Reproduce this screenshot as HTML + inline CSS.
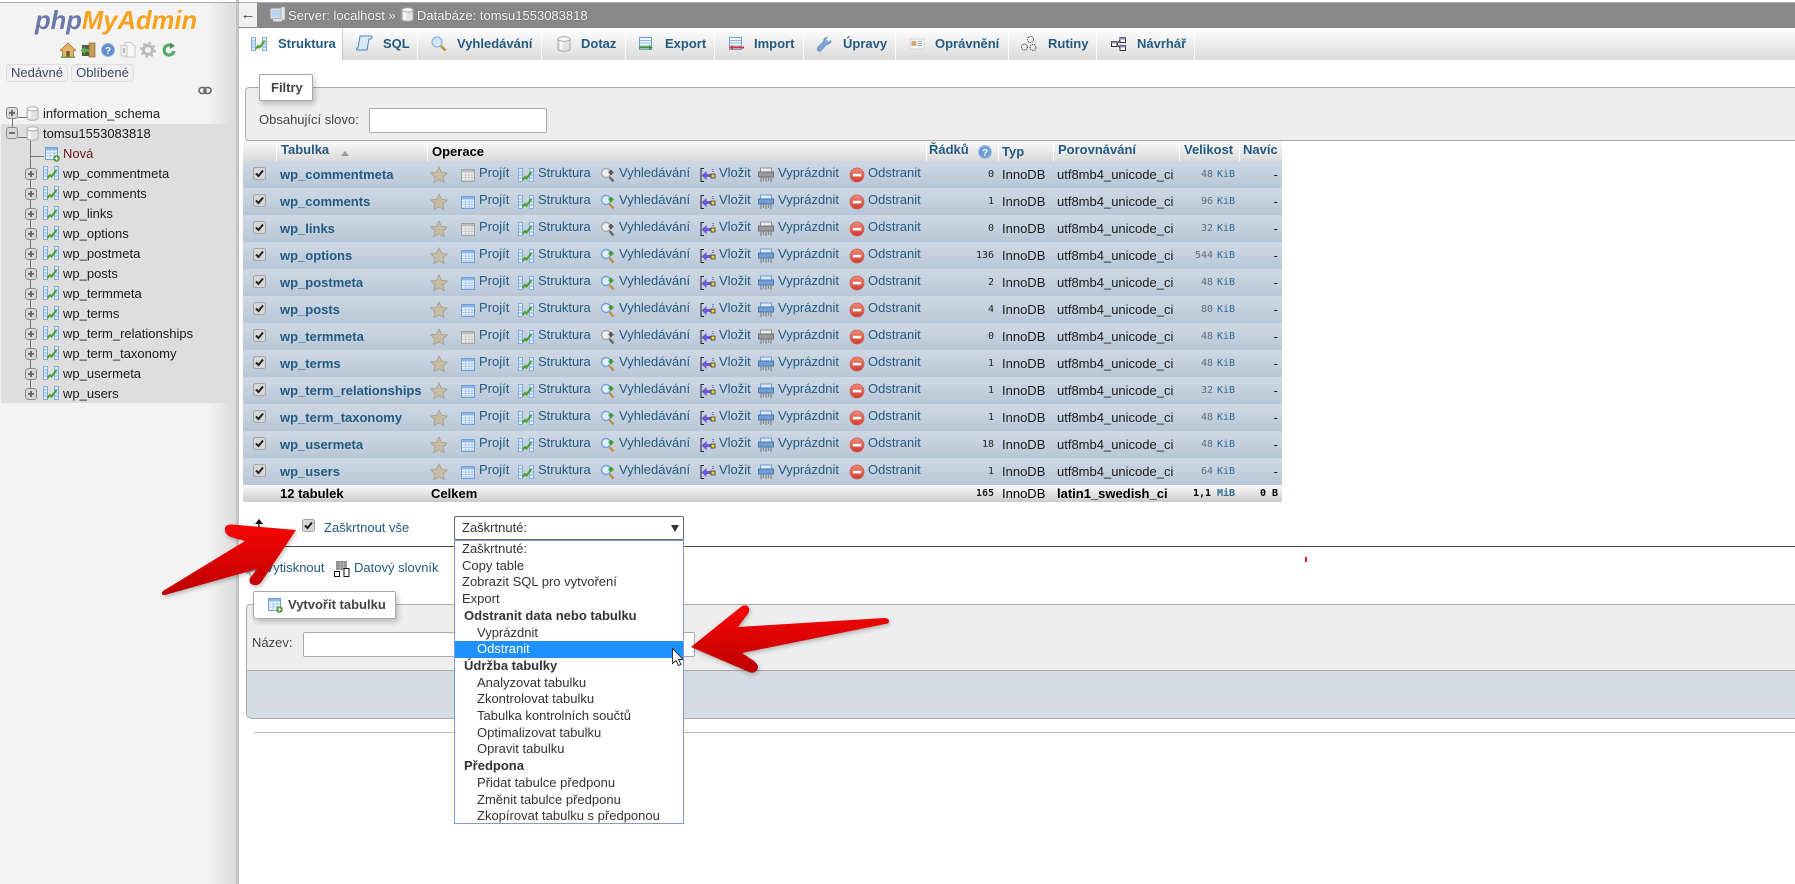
<!DOCTYPE html>
<html lang="cs"><head><meta charset="utf-8"><title>phpMyAdmin</title>
<style>
html,body{margin:0;padding:0;width:1795px;height:884px;overflow:hidden;background:#fff}
body{position:relative;font:13px/1.2 "Liberation Sans",Arial,sans-serif;color:#444}
div,span,b,svg,a{position:absolute;white-space:nowrap}
svg.i{width:16px;height:16px}
#side{left:0;top:2px;width:236px;height:882px;background:linear-gradient(to right,#f3f3f3 0,#f3f3f3 88%,#dcdcdc 100%)}
#split{left:236px;top:0;width:3px;height:884px;background:#c4c4c4}
#tl{left:0;top:0;width:1795px;height:2px;background:#fff}
#tg{left:0;top:2px;width:1795px;height:1px;background:#aaa}
.logo{left:35px;top:7px;font:italic bold 25.6px/28px "Liberation Sans",sans-serif;letter-spacing:0}
.btn{top:64px;height:16px;line-height:16px;border:1px solid #ddd;border-radius:4px;background:#f1f1f1;color:#3e4a63;text-align:center}
.tr{height:20px;line-height:20px;color:#1c1c1c;left:63px;margin-top:1px}
.ln{background:#777}
#hl{left:1px;top:124px;width:235px;height:279px;background:#dedede}
#top{left:239px;top:3px;width:1556px;height:25px;background:#888;color:#fff;line-height:25px;text-shadow:0 0 1px #333}
#back{left:239px;top:3px;width:18px;height:24px;background:#f1f1f1;color:#444;text-align:center;line-height:24px;font-size:15px}
#tabs{left:239px;top:28px;width:1556px;height:32px;background:linear-gradient(#fff,#dbdbdb)}
.tab{top:28px;height:32px;border-right:1px solid #fdfdfd}
.tx{top:28px;height:32px;line-height:32px;font-weight:bold;color:#235a81}
.box{background:#eee;border:1px solid #aaa;border-right:0;border-radius:4px 0 0 4px;box-sizing:border-box}
.leg{background:#fff;border:1px solid #aaa;border-radius:2px;box-shadow:2px 3px 6px rgba(0,0,0,.22);box-sizing:border-box;font-weight:bold;color:#444;line-height:25px}
.inp{background:#fff;border:1px solid #aaa;border-radius:2px;box-sizing:border-box}
#hd{left:243px;top:141px;width:1039px;height:20px;background:linear-gradient(#fafafa,#dadada)}
.sep{top:0;width:1px;height:20px;background:#fff}
.h{top:0;line-height:18px;font-weight:bold;color:#235a81}
.r{left:243px;width:1039px;height:27px;background:linear-gradient(#cfd9e4,#b7c6d7);color:#1d1d1d}
.r svg.c{left:10px;top:6px;width:13px;height:13px}
.r svg.s{left:187px;top:5px;width:18px;height:18px}
.n{left:37px;top:0;line-height:27px;font-weight:bold;color:#235a81}
.o{top:0;line-height:24px;color:#235a81}
.r svg.i{top:6px}
.i1{left:217px}.i2{left:275px}.i3{left:357px}.i4{left:457px}.i5{left:515px}.i6{left:606px}
.t1{left:236px}.t2{left:295px}.t3{left:376px}.t4{left:476px}.t5{left:535px}.t6{left:625px}
.m{font:10px/27px "DejaVu Sans Mono","Liberation Mono",monospace;top:0}
.k{right:288px;color:#222}.z{right:69px;color:#5c6c80}.u{left:974px;color:#2f6a92}.d{right:4px;top:0;line-height:27px}
.e{left:759px;top:0;line-height:27px}.l{left:814px;top:0;line-height:27px}
#tot{left:243px;top:485px;width:1039px;height:17px;background:linear-gradient(#fbfbfb,#cbcbcb);color:#000;font-weight:bold}
#tot span,#tot b{line-height:17px}
#tot .m{line-height:17px;font-weight:bold}
#dd{left:454px;top:540px;width:230px;height:284px;box-sizing:border-box;background:#fff;border:1px solid #7c9ad6;color:#333}
.it{left:0;width:228px;height:16.7px;line-height:16px;color:#333;box-sizing:border-box}
.p{padding-left:7px}.g{padding-left:9px;font-weight:bold}.ch{padding-left:22px}
</style></head><body>
<svg width="0" height="0" style="position:absolute;left:0;top:0"><defs>
<linearGradient id="redg" x1="0" y1="0" x2="0" y2="1"><stop offset="0" stop-color="#f70505"/><stop offset="1" stop-color="#bd0000"/></linearGradient>
<linearGradient id="dropg" x1="0" y1="0" x2="0" y2="1"><stop offset="0" stop-color="#f08a7a"/><stop offset="1" stop-color="#d23a2a"/></linearGradient>
<symbol id="st" viewBox="0 0 16 16"><rect x=".5" y="1.5" width="4" height="13" fill="#e6eef9" stroke="#7fade2"/><rect x="11.5" y="1.5" width="4" height="13" fill="#e6eef9" stroke="#7fade2"/><path d="M1 5h3M1 8h3M1 11h3M12 5h3M12 8h3M12 11h3" stroke="#7fade2" fill="none"/><path d="M4.500 13l2.500-3 1.500 1.500L13.500 5" stroke="#4a9e2c" stroke-width="2" fill="none"/></symbol>
<symbol id="br" viewBox="0 0 16 16"><rect x="1.500" y="2.500" width="13" height="12" fill="#f4f8fd" stroke="#6a9fdc"/><rect x="2" y="3" width="12" height="2.500" fill="#8db6e8"/><path d="M2 8h12M2 10.500h12M2 13h12M5.500 6v8M9 6v8M12 6v8" stroke="#a6c7ee" fill="none"/></symbol>
<symbol id="br0" viewBox="0 0 16 16"><rect x="1.500" y="2.500" width="13" height="12" fill="#f3f3f3" stroke="#a3a3a3"/><rect x="2" y="3" width="12" height="2.500" fill="#bdbdbd"/><path d="M2 8h12M2 10.500h12M2 13h12M5.500 6v8M9 6v8M12 6v8" stroke="#c8c8c8" fill="none"/></symbol>
<symbol id="se" viewBox="0 0 16 16"><circle cx="6" cy="6" r="4.500" fill="#e4effb" stroke="#6ca0dc" stroke-width="1.400"/><path d="M9.500 10l4 4.500" stroke="#c78a3a" stroke-width="2.400"/><path d="M11 3v5M8.500 5.500h5" stroke="#3f9a2a" stroke-width="2"/></symbol>
<symbol id="se0" viewBox="0 0 16 16"><circle cx="6" cy="6" r="4.500" fill="#f0f0f0" stroke="#a6a6a6" stroke-width="1.400"/><path d="M9.500 10l4 4.500" stroke="#666" stroke-width="2.400"/><path d="M11 3v5M8.500 5.500h5" stroke="#555" stroke-width="2"/></symbol>
<symbol id="ins" viewBox="0 0 16 16"><path d="M4 1.500H1v13h3" stroke="#222" fill="none"/><path d="M1.500 8.500l5-4.500v3h4v3h-4v3z" fill="#6b58d6"/><rect x="11" y="7" width="4" height="4" fill="#f5d33a" stroke="#222" stroke-width=".7"/><path d="M13 2v3" stroke="#6b58d6" stroke-width="1.500" stroke-dasharray="1 1"/></symbol>
<symbol id="sh" viewBox="0 0 16 16"><rect x="2.500" y="1" width="11" height="4" fill="#dce8f6" stroke="#6a9bd4"/><rect x=".5" y="5" width="15" height="5" fill="#6f9fd8" stroke="#4a76ad"/><path d="M3 10v5M5.500 10v4M8 10v5M10.500 10v4M13 10v5" stroke="#8a8a8a" stroke-width="1.300"/></symbol>
<symbol id="sh0" viewBox="0 0 16 16"><rect x="2.500" y="1" width="11" height="4" fill="#eee" stroke="#8f8f8f"/><rect x=".5" y="5" width="15" height="5" fill="#9a9a9a" stroke="#6f6f6f"/><path d="M3 10v5M5.500 10v4M8 10v5M10.500 10v4M13 10v5" stroke="#8a8a8a" stroke-width="1.300"/></symbol>
<symbol id="dr" viewBox="0 0 16 16"><circle cx="8" cy="8" r="7" fill="url(#dropg)" stroke="#c9604f" stroke-width=".8"/><rect x="3.800" y="6.800" width="8.400" height="2.600" fill="#fff"/></symbol>
<symbol id="star" viewBox="0 0 18 18"><path d="M9 1l2.400 5.300 5.800.7-4.300 3.900 1.200 5.700L9 13.800l-5.100 2.800 1.200-5.700L.8 7l5.800-.7z" fill="#c6bda4" stroke="#a39b84" stroke-width=".8"/></symbol>
<symbol id="cb" viewBox="0 0 13 13"><rect x=".5" y=".5" width="12" height="12" rx="2" fill="#d6d6d6" stroke="#a3a3a3"/><path d="M3 6.500l2.500 2.500 4.500-5.500" stroke="#222" stroke-width="2" fill="none"/></symbol>
<symbol id="plus" viewBox="0 0 12 12"><rect x=".5" y=".5" width="11" height="11" rx="2.500" fill="#d7d7d7" stroke="#8b8b8b"/><path d="M3 6h6M6 3v6" stroke="#555" stroke-width="1.600"/></symbol>
<symbol id="minus" viewBox="0 0 12 12"><rect x=".5" y=".5" width="11" height="11" rx="2.500" fill="#d7d7d7" stroke="#8b8b8b"/><path d="M3 6h6" stroke="#555" stroke-width="1.600"/></symbol>
<symbol id="db" viewBox="0 0 14 16"><path d="M1 3v10c0 3 12 3 12 0V3z" fill="#e3e3e3" stroke="#aaa"/><ellipse cx="7" cy="3" rx="6" ry="2.200" fill="#f8f8f8" stroke="#aaa"/><rect x="3" y="5.500" width="2" height="8" fill="#fff"/></symbol>
<symbol id="nw" viewBox="0 0 16 16"><rect x="1.500" y="1.500" width="12" height="12" fill="#f4f8fd" stroke="#6a9fdc"/><rect x="2" y="2" width="11" height="2.500" fill="#8db6e8"/><path d="M2 7h11M2 10h11M6 5v8M10 5v8" stroke="#a6c7ee"/><circle cx="12.500" cy="12.500" r="3.300" fill="#4a9a34"/><path d="M10.700 12.500h3.600M12.500 10.700v3.600" stroke="#fff" stroke-width="1.100"/></symbol>
</defs></svg>

<div id="tl"></div><div id="side"></div><div id="split"></div><div id="tg"></div>
<div class="logo"><span style="position:static;color:#6c78a8">php</span><span style="position:static;color:#f7a11d">MyAdmin</span></div>
<svg style="left:60px;top:42px" width="16" height="16" viewBox="0 0 16 16"><path d="M8 1L0 8.500h2.500V15h11V8.500H16z" fill="#e0b36a" stroke="#a9762f" stroke-width=".8"/><rect x="6.300" y="9" width="3.400" height="6" fill="#7a5a2a"/><rect x="1" y="14.500" width="14" height="1.500" fill="#6aa33c"/></svg>
<svg style="left:80px;top:42px" width="16" height="16" viewBox="0 0 16 16"><rect x="9" y="1" width="6" height="14" fill="#c99b58" stroke="#8c6a35" stroke-width=".7"/><rect x="2" y="3" width="7" height="11" fill="#4f5d4a"/><path d="M.5 8.500L5 4.500v2.500h4v3H5v2.500z" fill="#5cb04a"/></svg>
<svg style="left:101px;top:43px" width="14" height="14" viewBox="0 0 14 14"><circle cx="7" cy="7" r="6.500" fill="#5f8fd0" stroke="#9ab8e2"/><text x="7" y="10.800" font-family="Liberation Sans" font-weight="bold" font-size="10" fill="#fff" text-anchor="middle">?</text></svg>
<svg style="left:120px;top:42px" width="16" height="16" viewBox="0 0 16 16"><path d="M5 .5h6l4 4V15H5z" fill="#f9f9f9" stroke="#c9c9c9"/><path d="M1 3.500h6V14H1z" fill="#eee" stroke="#c9c9c9"/><rect x="3" y="6" width="2" height="5" fill="#bbb"/></svg>
<svg style="left:140px;top:42px" width="16" height="16" viewBox="0 0 16 16"><circle cx="8" cy="8" r="4.500" fill="none" stroke="#bbb" stroke-width="3"/><circle cx="8" cy="8" r="7" fill="none" stroke="#bbb" stroke-width="2" stroke-dasharray="2.500 3"/></svg>
<svg style="left:162px;top:42px" width="14" height="16" viewBox="0 0 14 16"><path d="M12 9a5 5 0 1 1-2-5" fill="none" stroke="#58a964" stroke-width="3.200"/><path d="M8 .5l5 3.500-5 3z" fill="#3f944d"/></svg>
<div class="btn" style="left:6px;width:60px">Nedávné</div>
<div class="btn" style="left:71px;width:61px">Oblíbené</div>
<svg style="left:198px;top:86px" width="14" height="9" viewBox="0 0 14 9"><rect x="1" y="1.500" width="7" height="6" rx="3" fill="none" stroke="#666" stroke-width="1.600"/><rect x="6" y="1.500" width="7" height="6" rx="3" fill="none" stroke="#666" stroke-width="1.600"/></svg>

<div id="hl"></div>
<div class="ln" style="left:12px;top:119px;width:1px;height:9px"></div>
<div class="ln" style="left:18px;top:117px;width:9px;height:1px"></div>
<div class="ln" style="left:18px;top:137px;width:9px;height:1px"></div>
<div class="ln" style="left:30px;top:139px;width:1px;height:254px"></div>
<div class="ln" style="left:30px;top:156px;width:14px;height:1px"></div>
<svg style="left:6px;top:107px" width="12" height="12"><use href="#plus"/></svg>
<svg style="left:6px;top:127px" width="12" height="12"><use href="#minus"/></svg>
<svg style="left:26px;top:106px" width="13" height="15"><use href="#db"/></svg>
<svg style="left:26px;top:126px" width="13" height="15"><use href="#db"/></svg>
<div class="tr" style="left:43px;top:103px">information_schema</div>
<div class="tr" style="left:43px;top:123px">tomsu1553083818</div>
<svg style="left:44px;top:146px" width="16" height="16"><use href="#nw"/></svg>
<div class="tr" style="top:143px;color:#6d1a1a">Nová</div>

<svg style="left:25px;top:168px" width="12" height="12"><use href="#plus"/></svg><svg style="left:43px;top:165px" width="16" height="16"><use href="#st"/></svg><div class="tr" style="top:163px">wp_commentmeta</div>
<svg style="left:25px;top:188px" width="12" height="12"><use href="#plus"/></svg><svg style="left:43px;top:185px" width="16" height="16"><use href="#st"/></svg><div class="tr" style="top:183px">wp_comments</div>
<svg style="left:25px;top:208px" width="12" height="12"><use href="#plus"/></svg><svg style="left:43px;top:205px" width="16" height="16"><use href="#st"/></svg><div class="tr" style="top:203px">wp_links</div>
<svg style="left:25px;top:228px" width="12" height="12"><use href="#plus"/></svg><svg style="left:43px;top:225px" width="16" height="16"><use href="#st"/></svg><div class="tr" style="top:223px">wp_options</div>
<svg style="left:25px;top:248px" width="12" height="12"><use href="#plus"/></svg><svg style="left:43px;top:245px" width="16" height="16"><use href="#st"/></svg><div class="tr" style="top:243px">wp_postmeta</div>
<svg style="left:25px;top:268px" width="12" height="12"><use href="#plus"/></svg><svg style="left:43px;top:265px" width="16" height="16"><use href="#st"/></svg><div class="tr" style="top:263px">wp_posts</div>
<svg style="left:25px;top:288px" width="12" height="12"><use href="#plus"/></svg><svg style="left:43px;top:285px" width="16" height="16"><use href="#st"/></svg><div class="tr" style="top:283px">wp_termmeta</div>
<svg style="left:25px;top:308px" width="12" height="12"><use href="#plus"/></svg><svg style="left:43px;top:305px" width="16" height="16"><use href="#st"/></svg><div class="tr" style="top:303px">wp_terms</div>
<svg style="left:25px;top:328px" width="12" height="12"><use href="#plus"/></svg><svg style="left:43px;top:325px" width="16" height="16"><use href="#st"/></svg><div class="tr" style="top:323px">wp_term_relationships</div>
<svg style="left:25px;top:348px" width="12" height="12"><use href="#plus"/></svg><svg style="left:43px;top:345px" width="16" height="16"><use href="#st"/></svg><div class="tr" style="top:343px">wp_term_taxonomy</div>
<svg style="left:25px;top:368px" width="12" height="12"><use href="#plus"/></svg><svg style="left:43px;top:365px" width="16" height="16"><use href="#st"/></svg><div class="tr" style="top:363px">wp_usermeta</div>
<svg style="left:25px;top:388px" width="12" height="12"><use href="#plus"/></svg><svg style="left:43px;top:385px" width="16" height="16"><use href="#st"/></svg><div class="tr" style="top:383px">wp_users</div>

<div id="top"><span style="left:49px;top:0">Server: localhost »</span><span style="left:178px;top:0">Databáze: tomsu1553083818</span></div>
<div id="back">←</div>
<svg style="left:270px;top:6px" width="16" height="18" viewBox="0 0 16 18"><rect x="1" y="3" width="11" height="9" fill="#bcd5ee" stroke="#dfe8f2"/><rect x="11" y="1" width="4" height="13" fill="#e3e3e3" stroke="#9a9a9a" stroke-width=".6"/><rect x="3" y="13" width="9" height="2.500" fill="#ddd"/></svg>
<svg style="left:401px;top:7px" width="13" height="15"><use href="#db"/></svg>

<div id="tabs"></div>
<div style="left:239px;top:28px;width:104px;height:33px;background:#fff"></div>
<div class="tab" style="left:342px;width:1px;background:linear-gradient(#ddd,#bbb);border:0"></div>
<div class="tab" style="left:417px;width:0"></div><div class="tab" style="left:541px;width:0"></div><div class="tab" style="left:625px;width:0"></div><div class="tab" style="left:714px;width:0"></div><div class="tab" style="left:803px;width:0"></div><div class="tab" style="left:895px;width:0"></div><div class="tab" style="left:1008px;width:0"></div><div class="tab" style="left:1096px;width:0"></div><div class="tab" style="left:1194px;width:0"></div>
<svg class="i" style="left:251px;top:36px"><use href="#st"/></svg><div class="tx" style="left:278px">Struktura</div>
<svg style="left:356px;top:35px" width="17" height="17" viewBox="0 0 17 17"><path d="M4 1h11c1 0 1.500 2 0 3h-2l-2 11H1.500C0 15 0 13 1.500 13H2z" fill="#dbe8f8" stroke="#4f86c6"/></svg><div class="tx" style="left:383px">SQL</div>
<svg class="i" style="left:431px;top:36px" viewBox="0 0 16 16"><circle cx="6" cy="6" r="5" fill="#d4e6f8" stroke="#8fb4dd" stroke-width="1.300"/><path d="M10 10l4.500 4.500" stroke="#c78a3a" stroke-width="2.600"/></svg><div class="tx" style="left:457px">Vyhledávání</div>
<svg style="left:557px;top:36px" width="14" height="16"><use href="#db"/></svg><div class="tx" style="left:581px">Dotaz</div>
<svg class="i" style="left:638px;top:36px" viewBox="0 0 16 16"><rect x="1.500" y="1.500" width="12" height="12" fill="#f4f8fd" stroke="#6a9fdc"/><path d="M2 4.500h11M2 7h11M2 10h11" stroke="#8db6e8"/><path d="M1 11.500h10" stroke="#3f9a2a" stroke-width="2"/><path d="M11 9l4 2.500-4 2.500z" fill="#3f9a2a"/></svg><div class="tx" style="left:665px">Export</div>
<svg class="i" style="left:728px;top:36px" viewBox="0 0 16 16"><rect x="1.500" y="1.500" width="12" height="12" fill="#f4f8fd" stroke="#6a9fdc"/><path d="M2 4.500h11M2 7h11M2 10h11" stroke="#8db6e8"/><path d="M5 11.500h11" stroke="#d33" stroke-width="2"/><path d="M5 9l-4 2.500 4 2.500z" fill="#d33"/></svg><div class="tx" style="left:754px">Import</div>
<svg class="i" style="left:816px;top:36px" viewBox="0 0 16 16"><path d="M2 14.500c-2-2 0-3.500 1.500-5l4-4c0-2 1-4 4-4.500L9.500 3.500l3 3L15 4.500c0 3-2.500 4-4.500 4l-4 4.500c-1.500 1.500-3 3.500-4.500 1.500z" fill="#7ea6d8" stroke="#5b82b8" stroke-width=".6"/></svg><div class="tx" style="left:843px">Úpravy</div>
<svg class="i" style="left:909px;top:36px" viewBox="0 0 16 16"><rect x="1" y="3" width="14" height="10" fill="#f6f6f6" stroke="#d4d4d4"/><rect x="2.500" y="5" width="5" height="5" fill="#d9a873"/><path d="M9 5.500h4M9 7.500h4M9 9.500h4" stroke="#9ab" /></svg><div class="tx" style="left:935px">Oprávnění</div>
<svg class="i" style="left:1021px;top:36px" viewBox="0 0 16 16"><g fill="none" stroke="#555" stroke-width="1.100" stroke-dasharray="1.300 .8"><circle cx="9.500" cy="3.500" r="3"/><circle cx="3.500" cy="11" r="3"/><circle cx="12" cy="11.500" r="3"/></g></svg><div class="tx" style="left:1048px">Rutiny</div>
<svg class="i" style="left:1111px;top:36px;width:15px;height:16px" viewBox="0 0 15 16"><rect x="9" y="1.500" width="5.500" height="5" fill="#fff" stroke="#333"/><rect x="9" y="9.500" width="5.500" height="5" fill="#fff" stroke="#333"/><rect x=".5" y="5.500" width="5.500" height="5" fill="#fff" stroke="#333"/><path d="M6 8l3-4M6 8l3 4" stroke="#333"/><rect x="9" y="1.500" width="5.500" height="2" fill="#8f8fc0"/><rect x=".5" y="5.500" width="5.500" height="2" fill="#8f8fc0"/><rect x="9" y="9.500" width="5.500" height="2" fill="#8f8fc0"/></svg><div class="tx" style="left:1137px">Návrhář</div>

<div class="box" style="left:245px;top:87px;width:1550px;height:54px"></div>
<div class="leg" style="left:259px;top:74px;width:54px;height:27px;padding-left:11px">Filtry</div>
<div style="left:259px;top:112px;line-height:16px">Obsahující slovo:</div>
<div class="inp" style="left:369px;top:108px;width:178px;height:25px"></div>

<div id="hd">
<div class="sep" style="left:33px"></div><div class="sep" style="left:184px"></div><div class="sep" style="left:683px"></div><div class="sep" style="left:755px"></div><div class="sep" style="left:810px"></div><div class="sep" style="left:936px"></div><div class="sep" style="left:996px"></div>
<span class="h" style="left:38px">Tabulka</span>
<svg style="left:98px;top:10px" width="8" height="5" viewBox="0 0 8 5"><path d="M4 0l4 5H0z" fill="#999"/></svg>
<span class="h" style="left:189px;top:2px;color:#000">Operace</span>
<span class="h" style="left:686px">Řádků</span>
<svg style="left:735px;top:4px" width="14" height="14" viewBox="0 0 14 14"><circle cx="7" cy="7" r="6.500" fill="#6f9bd6" stroke="#a8c3e6"/><text x="7" y="10.800" font-family="Liberation Sans" font-weight="bold" font-size="10" fill="#fff" text-anchor="middle">?</text></svg>
<span class="h" style="left:759px;top:2px">Typ</span>
<span class="h" style="left:815px">Porovnávání</span>
<span class="h" style="left:941px">Velikost</span>
<span class="h" style="left:1000px">Navíc</span>
</div>

<div class="r" style="top:161px"><svg class="c"><use href="#cb"/></svg><span class="n">wp_commentmeta</span><svg class="s"><use href="#star"/></svg><svg class="i i1"><use href="#br0"/></svg><span class="o t1">Projít</span><svg class="i i2"><use href="#st"/></svg><span class="o t2">Struktura</span><svg class="i i3"><use href="#se0"/></svg><span class="o t3">Vyhledávání</span><svg class="i i4"><use href="#ins"/></svg><span class="o t4">Vložit</span><svg class="i i5"><use href="#sh0"/></svg><span class="o t5">Vyprázdnit</span><svg class="i i6"><use href="#dr"/></svg><span class="o t6">Odstranit</span><span class="m k">0</span><span class="e">InnoDB</span><span class="l">utf8mb4_unicode_ci</span><span class="m z">48</span><span class="m u">KiB</span><span class="d">-</span></div>
<div class="r" style="top:188px"><svg class="c"><use href="#cb"/></svg><span class="n">wp_comments</span><svg class="s"><use href="#star"/></svg><svg class="i i1"><use href="#br"/></svg><span class="o t1">Projít</span><svg class="i i2"><use href="#st"/></svg><span class="o t2">Struktura</span><svg class="i i3"><use href="#se"/></svg><span class="o t3">Vyhledávání</span><svg class="i i4"><use href="#ins"/></svg><span class="o t4">Vložit</span><svg class="i i5"><use href="#sh"/></svg><span class="o t5">Vyprázdnit</span><svg class="i i6"><use href="#dr"/></svg><span class="o t6">Odstranit</span><span class="m k">1</span><span class="e">InnoDB</span><span class="l">utf8mb4_unicode_ci</span><span class="m z">96</span><span class="m u">KiB</span><span class="d">-</span></div>
<div class="r" style="top:215px"><svg class="c"><use href="#cb"/></svg><span class="n">wp_links</span><svg class="s"><use href="#star"/></svg><svg class="i i1"><use href="#br0"/></svg><span class="o t1">Projít</span><svg class="i i2"><use href="#st"/></svg><span class="o t2">Struktura</span><svg class="i i3"><use href="#se0"/></svg><span class="o t3">Vyhledávání</span><svg class="i i4"><use href="#ins"/></svg><span class="o t4">Vložit</span><svg class="i i5"><use href="#sh0"/></svg><span class="o t5">Vyprázdnit</span><svg class="i i6"><use href="#dr"/></svg><span class="o t6">Odstranit</span><span class="m k">0</span><span class="e">InnoDB</span><span class="l">utf8mb4_unicode_ci</span><span class="m z">32</span><span class="m u">KiB</span><span class="d">-</span></div>
<div class="r" style="top:242px"><svg class="c"><use href="#cb"/></svg><span class="n">wp_options</span><svg class="s"><use href="#star"/></svg><svg class="i i1"><use href="#br"/></svg><span class="o t1">Projít</span><svg class="i i2"><use href="#st"/></svg><span class="o t2">Struktura</span><svg class="i i3"><use href="#se"/></svg><span class="o t3">Vyhledávání</span><svg class="i i4"><use href="#ins"/></svg><span class="o t4">Vložit</span><svg class="i i5"><use href="#sh"/></svg><span class="o t5">Vyprázdnit</span><svg class="i i6"><use href="#dr"/></svg><span class="o t6">Odstranit</span><span class="m k">136</span><span class="e">InnoDB</span><span class="l">utf8mb4_unicode_ci</span><span class="m z">544</span><span class="m u">KiB</span><span class="d">-</span></div>
<div class="r" style="top:269px"><svg class="c"><use href="#cb"/></svg><span class="n">wp_postmeta</span><svg class="s"><use href="#star"/></svg><svg class="i i1"><use href="#br"/></svg><span class="o t1">Projít</span><svg class="i i2"><use href="#st"/></svg><span class="o t2">Struktura</span><svg class="i i3"><use href="#se"/></svg><span class="o t3">Vyhledávání</span><svg class="i i4"><use href="#ins"/></svg><span class="o t4">Vložit</span><svg class="i i5"><use href="#sh"/></svg><span class="o t5">Vyprázdnit</span><svg class="i i6"><use href="#dr"/></svg><span class="o t6">Odstranit</span><span class="m k">2</span><span class="e">InnoDB</span><span class="l">utf8mb4_unicode_ci</span><span class="m z">48</span><span class="m u">KiB</span><span class="d">-</span></div>
<div class="r" style="top:296px"><svg class="c"><use href="#cb"/></svg><span class="n">wp_posts</span><svg class="s"><use href="#star"/></svg><svg class="i i1"><use href="#br"/></svg><span class="o t1">Projít</span><svg class="i i2"><use href="#st"/></svg><span class="o t2">Struktura</span><svg class="i i3"><use href="#se"/></svg><span class="o t3">Vyhledávání</span><svg class="i i4"><use href="#ins"/></svg><span class="o t4">Vložit</span><svg class="i i5"><use href="#sh"/></svg><span class="o t5">Vyprázdnit</span><svg class="i i6"><use href="#dr"/></svg><span class="o t6">Odstranit</span><span class="m k">4</span><span class="e">InnoDB</span><span class="l">utf8mb4_unicode_ci</span><span class="m z">80</span><span class="m u">KiB</span><span class="d">-</span></div>
<div class="r" style="top:323px"><svg class="c"><use href="#cb"/></svg><span class="n">wp_termmeta</span><svg class="s"><use href="#star"/></svg><svg class="i i1"><use href="#br0"/></svg><span class="o t1">Projít</span><svg class="i i2"><use href="#st"/></svg><span class="o t2">Struktura</span><svg class="i i3"><use href="#se0"/></svg><span class="o t3">Vyhledávání</span><svg class="i i4"><use href="#ins"/></svg><span class="o t4">Vložit</span><svg class="i i5"><use href="#sh0"/></svg><span class="o t5">Vyprázdnit</span><svg class="i i6"><use href="#dr"/></svg><span class="o t6">Odstranit</span><span class="m k">0</span><span class="e">InnoDB</span><span class="l">utf8mb4_unicode_ci</span><span class="m z">48</span><span class="m u">KiB</span><span class="d">-</span></div>
<div class="r" style="top:350px"><svg class="c"><use href="#cb"/></svg><span class="n">wp_terms</span><svg class="s"><use href="#star"/></svg><svg class="i i1"><use href="#br"/></svg><span class="o t1">Projít</span><svg class="i i2"><use href="#st"/></svg><span class="o t2">Struktura</span><svg class="i i3"><use href="#se"/></svg><span class="o t3">Vyhledávání</span><svg class="i i4"><use href="#ins"/></svg><span class="o t4">Vložit</span><svg class="i i5"><use href="#sh"/></svg><span class="o t5">Vyprázdnit</span><svg class="i i6"><use href="#dr"/></svg><span class="o t6">Odstranit</span><span class="m k">1</span><span class="e">InnoDB</span><span class="l">utf8mb4_unicode_ci</span><span class="m z">48</span><span class="m u">KiB</span><span class="d">-</span></div>
<div class="r" style="top:377px"><svg class="c"><use href="#cb"/></svg><span class="n">wp_term_relationships</span><svg class="s"><use href="#star"/></svg><svg class="i i1"><use href="#br"/></svg><span class="o t1">Projít</span><svg class="i i2"><use href="#st"/></svg><span class="o t2">Struktura</span><svg class="i i3"><use href="#se"/></svg><span class="o t3">Vyhledávání</span><svg class="i i4"><use href="#ins"/></svg><span class="o t4">Vložit</span><svg class="i i5"><use href="#sh"/></svg><span class="o t5">Vyprázdnit</span><svg class="i i6"><use href="#dr"/></svg><span class="o t6">Odstranit</span><span class="m k">1</span><span class="e">InnoDB</span><span class="l">utf8mb4_unicode_ci</span><span class="m z">32</span><span class="m u">KiB</span><span class="d">-</span></div>
<div class="r" style="top:404px"><svg class="c"><use href="#cb"/></svg><span class="n">wp_term_taxonomy</span><svg class="s"><use href="#star"/></svg><svg class="i i1"><use href="#br"/></svg><span class="o t1">Projít</span><svg class="i i2"><use href="#st"/></svg><span class="o t2">Struktura</span><svg class="i i3"><use href="#se"/></svg><span class="o t3">Vyhledávání</span><svg class="i i4"><use href="#ins"/></svg><span class="o t4">Vložit</span><svg class="i i5"><use href="#sh"/></svg><span class="o t5">Vyprázdnit</span><svg class="i i6"><use href="#dr"/></svg><span class="o t6">Odstranit</span><span class="m k">1</span><span class="e">InnoDB</span><span class="l">utf8mb4_unicode_ci</span><span class="m z">48</span><span class="m u">KiB</span><span class="d">-</span></div>
<div class="r" style="top:431px"><svg class="c"><use href="#cb"/></svg><span class="n">wp_usermeta</span><svg class="s"><use href="#star"/></svg><svg class="i i1"><use href="#br"/></svg><span class="o t1">Projít</span><svg class="i i2"><use href="#st"/></svg><span class="o t2">Struktura</span><svg class="i i3"><use href="#se"/></svg><span class="o t3">Vyhledávání</span><svg class="i i4"><use href="#ins"/></svg><span class="o t4">Vložit</span><svg class="i i5"><use href="#sh"/></svg><span class="o t5">Vyprázdnit</span><svg class="i i6"><use href="#dr"/></svg><span class="o t6">Odstranit</span><span class="m k">18</span><span class="e">InnoDB</span><span class="l">utf8mb4_unicode_ci</span><span class="m z">48</span><span class="m u">KiB</span><span class="d">-</span></div>
<div class="r" style="top:458px"><svg class="c"><use href="#cb"/></svg><span class="n">wp_users</span><svg class="s"><use href="#star"/></svg><svg class="i i1"><use href="#br"/></svg><span class="o t1">Projít</span><svg class="i i2"><use href="#st"/></svg><span class="o t2">Struktura</span><svg class="i i3"><use href="#se"/></svg><span class="o t3">Vyhledávání</span><svg class="i i4"><use href="#ins"/></svg><span class="o t4">Vložit</span><svg class="i i5"><use href="#sh"/></svg><span class="o t5">Vyprázdnit</span><svg class="i i6"><use href="#dr"/></svg><span class="o t6">Odstranit</span><span class="m k">1</span><span class="e">InnoDB</span><span class="l">utf8mb4_unicode_ci</span><span class="m z">64</span><span class="m u">KiB</span><span class="d">-</span></div>

<div id="tot"><span style="left:37px;top:0">12 tabulek</span><span style="left:188px;top:0">Celkem</span><span class="m k">165</span><span style="left:759px;top:0;font-weight:normal">InnoDB</span><span style="left:814px;top:0">latin1_swedish_ci</span><span class="m" style="right:71px">1,1</span><span class="m" style="left:974px;color:#2f6a92">MiB</span><span class="m" style="right:4px">0 B</span></div>

<svg style="left:254px;top:518px" width="10" height="12" viewBox="0 0 10 12"><path d="M5 1L9 6H1z" fill="#000"/><path d="M5 5v7" stroke="#000" stroke-width="1.200"/></svg>
<svg style="left:302px;top:519px;width:13px;height:13px"><use href="#cb"/></svg>
<div style="left:324px;top:520px;line-height:16px;color:#235a81">Zaškrtnout vše</div>
<div style="left:240px;top:546px;width:1555px;height:1px;background:#444"></div>
<div style="left:1305px;top:557px;width:2px;height:5px;background:#d22"></div>

<svg class="i" style="left:246px;top:561px" viewBox="0 0 16 16"><rect x="3" y="1" width="10" height="5" fill="#eee" stroke="#999"/><rect x="1" y="6" width="14" height="6" fill="#bbb" stroke="#888"/><rect x="4" y="10" width="8" height="5" fill="#fff" stroke="#999"/></svg>
<div style="left:265px;top:560px;line-height:16px;color:#235a81">Vytisknout</div>
<svg class="i" style="left:334px;top:561px" viewBox="0 0 16 16"><rect x="2" y="0" width="11" height="9" fill="#8d8d8d"/><path d="M2 3h11M2 6h11M6 0v9M9.500 0v9" stroke="#ccc" stroke-width=".6"/><rect x=".5" y="10.500" width="5" height="5" fill="#fff" stroke="#111"/><rect x="10" y="7.500" width="5" height="8" fill="#fff" stroke="#111"/></svg>
<div style="left:354px;top:560px;line-height:16px;color:#235a81">Datový slovník</div>

<div class="box" style="left:246px;top:604px;width:1549px;height:115px;border-radius:4px 0 0 6px"></div>
<div style="left:247px;top:670px;width:1548px;height:48px;background:#d4dbe3;border-top:1px solid #aaa;box-sizing:border-box;border-radius:0 0 0 5px"></div>
<div class="leg" style="left:253px;top:591px;width:143px;height:28px;padding-left:34px;line-height:25px">Vytvořit tabulku</div>
<svg class="i" style="left:267px;top:597px"><use href="#nw"/></svg>
<div style="left:252px;top:635px;line-height:16px">Název:</div>
<div class="inp" style="left:303px;top:632px;width:392px;height:25px"></div>
<div style="left:254px;top:732px;width:1541px;height:1px;background:#bbb"></div>

<div style="left:454px;top:516px;width:230px;height:24px;box-sizing:border-box;background:#fff;border:1px solid #666;border-radius:2px;line-height:22px;padding-left:7px;color:#333">Zaškrtnuté:</div>
<svg style="left:671px;top:525px" width="8" height="7" viewBox="0 0 8 7"><path d="M0 0h8L4 7z" fill="#333"/></svg>
<div id="dd">
<div class="it p" style="top:0">Zaškrtnuté:</div>
<div class="it p" style="top:16.700px">Copy table</div>
<div class="it p" style="top:33.400px">Zobrazit SQL pro vytvoření</div>
<div class="it p" style="top:50.100px">Export</div>
<div class="it g" style="top:66.800px">Odstranit data nebo tabulku</div>
<div class="it ch" style="top:83.500px">Vyprázdnit</div>
<div class="it ch" style="top:99.500px;height:17px;line-height:16px;background:#1e90ff;color:#fff">Odstranit</div>
<div class="it g" style="top:116.900px">Údržba tabulky</div>
<div class="it ch" style="top:133.600px">Analyzovat tabulku</div>
<div class="it ch" style="top:150.300px">Zkontrolovat tabulku</div>
<div class="it ch" style="top:167px">Tabulka kontrolních součtů</div>
<div class="it ch" style="top:183.700px">Optimalizovat tabulku</div>
<div class="it ch" style="top:200.400px">Opravit tabulku</div>
<div class="it g" style="top:217.100px">Předpona</div>
<div class="it ch" style="top:233.800px">Přidat tabulce předponu</div>
<div class="it ch" style="top:250.500px">Změnit tabulce předponu</div>
<div class="it ch" style="top:267.200px">Zkopírovat tabulku s předponou</div>
</div>

<svg style="left:0;top:0;width:1795px;height:884px;pointer-events:none" viewBox="0 0 1795 884">
<g style="filter:drop-shadow(1px 2px 2px rgba(0,0,0,.25))">
<path d="M296 530L232 524.500Q224 524 225 531Q226 535 231 537L245 541L163 591Q160 595 165 595L257 569L250 578Q248 584 254 585Q259 586 262 581Z" fill="url(#redg)"/>
<path d="M691 647L742 606Q747 604 749 608Q750 611 747 615L738 627L884 618Q889 618 889 621Q889 624 885 624L742 653L754 661Q760 666 757 670Q754 674 749 672Z" fill="url(#redg)"/>
</g>
<path d="M672.500 648.500v15l3.500-3 2.500 5 2.500-1-2.500-5h4.500z" fill="#fff" stroke="#222" stroke-width=".9"/>
</svg>
</body></html>
